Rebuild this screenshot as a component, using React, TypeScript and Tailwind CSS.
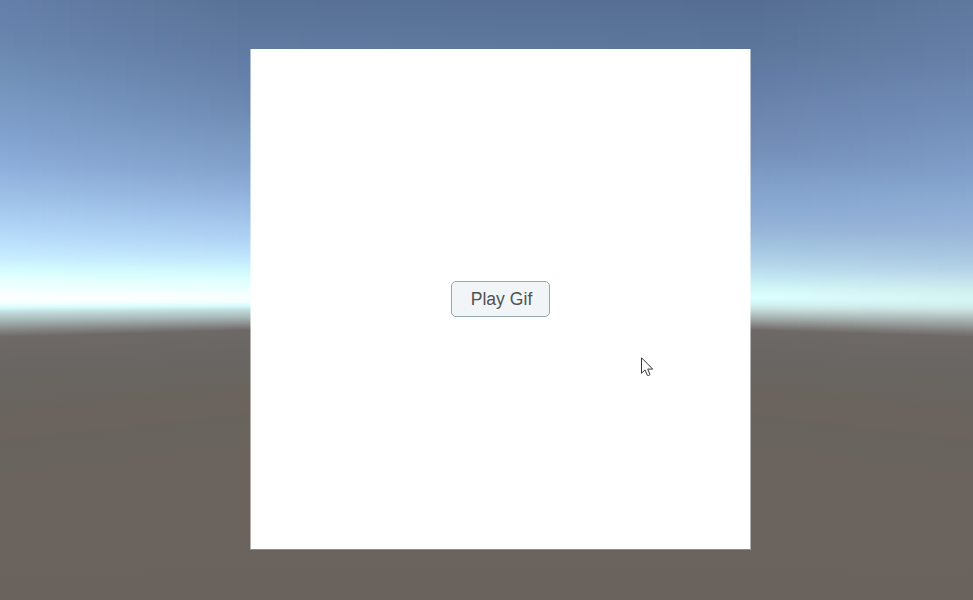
type Stop = [number, string];

// Vertical colour profiles of the sky and ground at four positions across the view.
const profiles: { x: number; stops: Stop[] }[] = [
  {
    x: 0,
    stops: [
      [0, '647fa9'], [40, '6985ae'], [73, '7190b7'], [110, '7b9bc6'], [140, '83a3d0'],
      [170, '8fb0dc'], [200, '9fc3e8'], [225, 'afd3f5'], [245, 'bde2fd'], [260, 'c9effe'],
      [268, 'd3fafc'], [278, 'e2fffe'], [290, 'f4ffff'], [299, 'ffffff'], [304, 'f0ffff'],
      [308, 'd5fbfb'], [312, 'c5dddd'], [320, 'a9b9b9'], [330, '858787'], [337, '6e6967'],
      [365, '6a6663'], [411, '69645e'], [413, '6b635d'], [439, '6b635d'], [441, '68635c'],
      [474, '69645e'], [476, '6b635d'], [600, '6a625d'],
    ],
  },
  {
    x: 250,
    stops: [
      [0, '587195'], [50, '607aa2'], [80, '6681aa'], [115, '6f8cb4'], [145, '7b99c1'],
      [165, '81a0ca'], [190, '8fafda'], [215, '9fc1e8'], [240, 'b0d4f4'], [258, 'c1e7fd'],
      [270, 'cff8fc'], [280, 'defffe'], [290, 'edffff'], [298, 'fafffd'], [302, 'f0ffff'],
      [306, 'd5fbfb'], [310, 'c0dcdc'], [317, 'a9b9b9'], [325, '858787'], [330, '6e6967'],
      [355, '6a6663'], [390, '69645e'], [392, '6b635d'], [413, '6b635d'], [415, '68635c'],
      [442, '69645e'], [444, '6b635d'], [600, '6a625d'],
    ],
  },
  {
    x: 750,
    stops: [
      [0, '566d93'], [45, '5b7599'], [75, '617ba4'], [110, '6a84ad'], [130, '6f89b2'],
      [150, '738fb8'], [180, '7f9dc8'], [205, '89a9d1'], [225, '94b1d7'], [245, 'a2c3df'],
      [265, 'b5d6ea'], [278, 'c3e9f2'], [288, 'd3f7f7'], [298, 'dcffff'], [304, 'd3f3f3'],
      [308, 'cae4e3'], [313, 'b8cbc9'], [319, 'a0aaa9'], [326, '817f7e'], [330, '6e6967'],
      [355, '6a6663'], [390, '69645e'], [392, '6b635d'], [413, '6b635d'], [415, '68635c'],
      [442, '69645e'], [444, '6b635d'], [600, '6a625d'],
    ],
  },
  {
    x: 973,
    stops: [
      [0, '5d779d'], [60, '6680a8'], [90, '6d88b1'], [115, '718eb8'], [140, '7795bf'],
      [175, '819fca'], [200, '8cacd3'], [225, '96b2d9'], [240, '9ebbdb'], [255, 'a7c7e1'],
      [270, 'b5d3e8'], [280, 'c3e1eb'], [290, 'd0eeee'], [299, 'd6f5f5'], [306, 'd1eeed'],
      [310, 'c9e3e2'], [316, 'b7c6c5'], [324, '9aa2a1'], [332, '7e7d7c'], [337, '6e6967'],
      [365, '6a6663'], [411, '69645e'], [413, '6b635d'], [439, '6b635d'], [441, '68635c'],
      [474, '69645e'], [476, '6b635d'], [600, '6a625d'],
    ],
  },
];

const channel = (hex: string, i: number) => parseInt(hex.slice(i * 2, i * 2 + 2), 16);

function gradientAt(x: number) {
  let i = 0;
  while (i < profiles.length - 2 && x > profiles[i + 1].x) i++;
  const a = profiles[i];
  const b = profiles[i + 1];
  const t = Math.min(1, (x - a.x) / (b.x - a.x));
  const stops = a.stops.map(([ya, ca], k) => {
    const [yb, cb] = b.stops[k];
    const rgb = [0, 1, 2].map((c) => Math.round(channel(ca, c) * (1 - t) + channel(cb, c) * t));
    return `rgb(${rgb.join(',')}) ${(ya * (1 - t) + yb * t).toFixed(2)}px`;
  });
  return `linear-gradient(to bottom, ${stops.join(', ')})`;
}

const COLUMN = 7;
const columns = Array.from({ length: 139 }, (_, i) => gradientAt(i * COLUMN + COLUMN / 2));

function Skybox() {
  return (
    <div className="absolute inset-0 flex" aria-hidden="true">
      {columns.map((backgroundImage, i) => (
        <div key={i} className="h-full w-[7px] shrink-0" style={{ backgroundImage }} />
      ))}
    </div>
  );
}

function Cursor() {
  return (
    <svg className="absolute left-[641px] top-[357px]" width="13" height="20" viewBox="0 0 13 20">
      <path
        d="M.5 .8V16.2L4 12.9L6.4 18.4Q7.6 19 9 17.6L6.7 12.1H11.7Z"
        fill="#fff"
        stroke="#38383c"
        strokeWidth="1"
        strokeLinejoin="miter"
      />
    </svg>
  );
}

export default function App() {
  return (
    <main className="relative flex h-[600px] w-[973px] items-start overflow-hidden pl-[250px] pt-[49px] font-['Liberation_Sans',Arial,sans-serif]">
      <Skybox />
      <section className="relative flex h-[501px] w-[501px] items-start justify-center border-x border-b border-x-white/50 border-b-white/25 bg-white bg-clip-padding pt-[232px]">
        <button className="flex h-9 w-[99px] items-center justify-center rounded-[5px] border border-[#94abae] bg-[#f2f5f8] pl-[2px] pt-px text-[17.6px] leading-none text-[#505252]">
          Play Gif
        </button>
      </section>
      <Cursor />
    </main>
  );
}
